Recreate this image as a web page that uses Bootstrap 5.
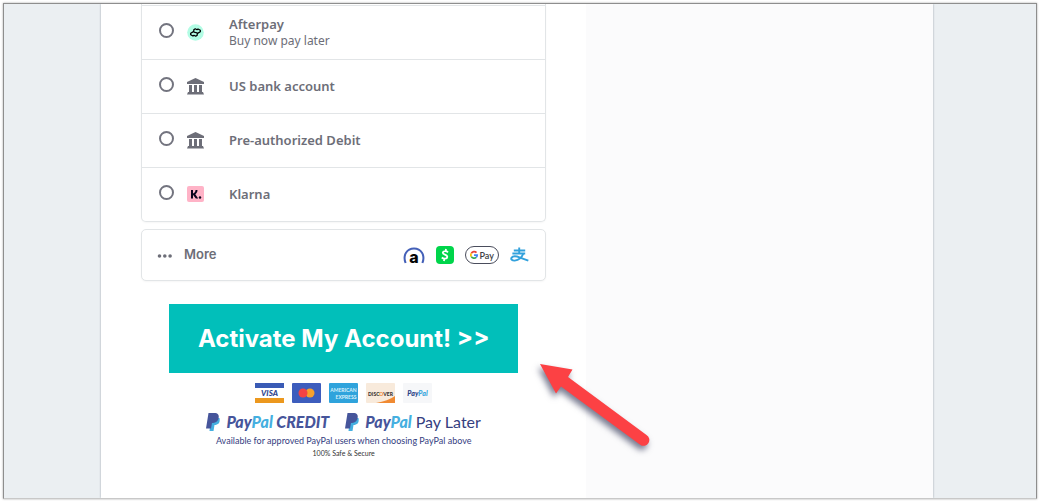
<!DOCTYPE html>
<html lang="en">
<head>
<meta charset="utf-8">
<meta name="viewport" content="width=device-width, initial-scale=1">
<title>Checkout</title>
<link rel="stylesheet" href="https://cdn.jsdelivr.net/npm/bootstrap@5.3.0/dist/css/bootstrap.min.css">
<style>
  body { background: #fff; font-family: "Noto Sans", "Open Sans", sans-serif; color: #6d6e78; }
  .frame { margin: 3px 4px 2px 3px; padding: 0 6px 0 0; min-height: calc(100vh - 5px); background: #ebeff2; border: 1px solid #8e8e8e; border-bottom-color: #c8c8c8; box-shadow: 0 0 2px rgba(0,0,0,.35); }
  .sheet { max-width: 832px; width: 100%; background: #fff; box-shadow: 0 0 2px rgba(40,50,70,.4); clip-path: inset(0 -4px); }
  .pay-col { padding: 0 40px; }
  .side-col { background: #fbfbfc; }
  .box { border: 1px solid #e2e5e7; border-radius: 5px; background: #fff; box-shadow: 0 1px 2px rgba(0,0,0,.04); }
  .methods { border-top: 0; border-radius: 0 0 5px 5px; padding-top: 1px; }
  .method { height: 54px; border-top: 1px solid #e2e5e7; padding: 0 17px; cursor: pointer; }
  .method .form-check-input { width: 15px; height: 15px; margin: 0 13px 5px 0; border: 2px solid #73747f; background: #fff; }
  .method .icon { width: 17px; height: 17px; margin-right: 25px; }
  .method strong { display: block; margin-bottom: 2px; font-size: 13px; line-height: 16px; font-weight: 600; }
  .method > span, .method > span strong { margin-bottom: 1px; }
  .method span span { display: block; font-size: 12px; line-height: 16px; }
  .more { height: 52px; margin-top: 7px; padding: 0 16px 2px 15px; color: #6d6e78; font: 600 13px Inter, sans-serif; }
  .more .marks { gap: 11px; margin-top: 2px; }
  .more svg { overflow: visible; }
  .cta { position: relative; margin: 23px 28px 0; }
  .cta button { height: 69px; border: 0; background: #01bfba; color: #fff; font: 700 24px Inter, sans-serif; }
  .arrow { position: absolute; left: calc(100% + 13px); top: 50px; z-index: 2; pointer-events: none; filter: drop-shadow(-2px 4px 3px rgba(30,35,70,.6)); }
  .cards { gap: 8px; margin-top: 10px; }
  .trust { font-family: Lato, sans-serif; color: #35407f; }
  .brand { gap: 16px; margin-top: 8px; height: 22px; font-size: 16px; line-height: 22px; white-space: nowrap; }
  .brand b { font-weight: 900; font-style: italic; color: #46559b; }
  .brand b i { color: #45afe0; }
  .brand svg { margin-right: 5px; }
  .note { font-size: 9px; line-height: 16px; }
  .safe { font-size: 7px; line-height: 8px; color: #333; }
</style>
<script src="https://cdn.jsdelivr.net/npm/bootstrap@5.3.0/dist/js/bootstrap.bundle.min.js"></script>
</head>
<body>
<svg class="d-none" aria-hidden="true">
  <symbol id="bank" viewBox="0 0 17 17"><path fill="#6d6e78" d="M8.500 0 17 4V6H0V4zM2 7h3v7H2zM7 7h3v7H7zM12 7h3v7h-3zM1 14h15l1 2.500H0z"/></symbol>
  <symbol id="pp" viewBox="0 0 15 18"><path fill="#45afe0" d="M5 5h8.500c1 5-1.500 7-5 7L7.500 18H3.500z"/><path fill="#46559b" d="M2.500 0H8c4 0 5.500 2 4.500 5.500C11.500 9 9 10 6 10L5 15.500H0z"/></symbol>
</svg>
<main class="frame d-flex justify-content-center">
  <div class="sheet row g-0">
    <section class="pay-col col-7">
      <form>
        <div class="box methods">
          <label class="method d-flex align-items-center"><input class="form-check-input" type="radio" name="method">
            <svg class="icon" viewBox="0 0 17 17"><circle cx="8.500" cy="8.500" r="8.300" fill="#b2fce4"/><path fill="none" stroke="#000" stroke-width="1.300" stroke-linejoin="round" d="M6.800 6.900V5.800L8.300 4.800 10 5.700 11 5 13.300 6.300V7.700L10.500 9.400 8.500 8.300M10.200 10.100V11.200L8.700 12.200 7 11.300 6 12 3.700 10.700V9.300L6.500 7.600 8.500 8.700"/></svg>
            <span><strong>Afterpay</strong><span>Buy now pay later</span></span></label>
          <label class="method d-flex align-items-center"><input class="form-check-input" type="radio" name="method">
            <svg class="icon"><use href="#bank"/></svg><strong>US bank account</strong></label>
          <label class="method d-flex align-items-center"><input class="form-check-input" type="radio" name="method">
            <svg class="icon"><use href="#bank"/></svg><strong>Pre-authorized Debit</strong></label>
          <label class="method d-flex align-items-center"><input class="form-check-input" type="radio" name="method">
            <svg class="icon" viewBox="0 0 17 17"><rect width="17" height="16" rx="2" fill="#ffb3c7"/><path fill="#0b051d" d="M4 4h2v8.500H4zM8.500 4h2C10.500 6 9.500 7.500 8.300 8.300L11.200 12.500H8.800L6 8.700V7.500C7.500 7 8.500 5.800 8.500 4z"/><circle cx="13" cy="11.500" r="1.200" fill="#0b051d"/></svg>
            <strong>Klarna</strong></label>
        </div>
        <button type="button" class="more box w-100 d-flex align-items-center">
          <svg class="me-2 mt-1" width="19" height="6"><g fill="#6d6e78"><circle cx="2.500" cy="3" r="1.800"/><circle cx="7.800" cy="3" r="1.800"/><circle cx="13.100" cy="3" r="1.800"/></g></svg>More
          <span class="marks ms-auto d-flex align-items-center">
            <svg width="22" height="18" viewBox="0 0 22 18"><path fill="none" stroke="#4460b8" stroke-width="2" d="M2.600 17C-.5 9 4 2.500 11 2.500S22.500 9 19.400 17"/><text x="11" y="16.500" text-anchor="middle" font-family="Inter" font-weight="800" font-size="16" fill="#050505">a</text></svg>
            <svg width="18" height="18" viewBox="0 0 18 18"><rect width="18" height="18" rx="4" fill="#00d54b"/><path fill="none" stroke="#fff" stroke-width="1.800" d="M12 6.300C10.500 4.800 7 4.700 6.800 6.700 6.700 9 11.500 8.300 11.300 10.900 11.100 13.200 7.500 13.200 5.800 11.500M10 3 9.700 5M8.300 12.800 7.900 15"/></svg>
            <svg width="34" height="18" viewBox="0 0 34 18"><rect x=".5" y=".5" width="33" height="17" rx="8.500" fill="#fff" stroke="#4a4d5c"/><g fill="none" stroke-width="1.700"><path stroke="#ea4335" d="M11.500 6.700A3.200 3.200 0 0 0 6.300 7.400"/><path stroke="#fbbc04" d="M6.300 7.400A3.200 3.200 0 0 0 6.300 10.600"/><path stroke="#34a853" d="M6.300 10.600A3.200 3.200 0 0 0 11.200 11.400"/><path stroke="#4285f4" d="M11.200 11.400A3.200 3.200 0 0 0 12.200 9.200H9"/></g><text x="14.500" y="12.500" font-family="Lato" font-size="9" fill="#3c4043">Pay</text></svg>
            <svg width="19" height="16" viewBox="0 0 20 16"><path fill="none" stroke="#32a1dc" stroke-width="2" d="M4 3.200H16M9.700 0V6.300M2.500 6.400H16M14 6.500C12.500 10.500 9 13.500 5 13.900 2 14 .8 12.500 1.500 11 3 8.800 7 9.200 10.500 10.700L19.300 14"/></svg>
          </span>
        </button>
        <div class="cta">
          <button type="submit" class="w-100">Activate My Account! &gt;&gt;</button>
          <svg class="arrow" width="120" height="100" viewBox="0 0 120 100"><path fill="#fc4144" d="M9 10 41.500 15.500 37 23 115.500 81A5.500 5.500 0 0 1 109.500 91L30 32.500 25 39.500z"/></svg>
        </div>
      </form>
      <div class="trust text-center">
        <div class="cards d-flex justify-content-center">
          <svg width="29" height="20"><path fill="#fff" d="M0 0h29v20H0z"/><path fill="#3a5bb5" d="M0 0h29v5H0z"/><path fill="#ec981e" d="M0 15h29v5H0z"/><text x="14.500" y="13" text-anchor="middle" font-family="Lato" font-style="italic" font-weight="900" font-size="8" fill="#2e468f">VISA</text></svg>
          <svg width="29" height="20"><rect width="29" height="20" rx="1" fill="#3d5dbd"/><circle cx="18" cy="10" r="4.500" fill="#f7a12b"/><circle cx="11" cy="10" r="4.500" fill="#f44343"/></svg>
          <svg width="29" height="20"><rect width="29" height="20" rx="1" fill="#2fa3dc"/><g fill="#d9f1fb" font-family="Lato" font-weight="700" text-anchor="middle" font-size="5"><text x="14.500" y="9">AMERICAN</text><text x="17" y="15.500">EXPRESS</text></g></svg>
          <svg width="29" height="20"><rect width="29" height="20" rx="1" fill="#f8eadb"/><path fill="#f08a32" d="M29 13V20H10Q22 18 29 13z"/><text x="14.500" y="12.500" text-anchor="middle" font-family="Lato" font-weight="900" font-size="5" fill="#383231">DISC<tspan fill="#f08a32">O</tspan>VER</text></svg>
          <svg width="29" height="20"><rect width="29" height="20" rx="1" fill="#f6f7f9"/><text x="14.500" y="13" text-anchor="middle" font-family="Lato" font-style="italic" font-weight="900" font-size="7" fill="#2b4186">Pay<tspan fill="#38a5dc">Pal</tspan></text></svg>
        </div>
        <div class="brand d-flex justify-content-center">
          <span class="d-flex align-items-center"><svg width="15" height="18"><use href="#pp"/></svg><b>Pay<i>Pal</i> CREDIT</b></span>
          <span class="d-flex align-items-center"><svg width="15" height="18"><use href="#pp"/></svg><b class="me-1">Pay<i>Pal</i></b>Pay Later</span>
        </div>
        <div class="note">Available for approved PayPal users when choosing PayPal above</div>
        <div class="safe">100% Safe &amp; Secure</div>
      </div>
    </section>
    <aside class="side-col col-5"></aside>
  </div>
</main>
</body>
</html>
